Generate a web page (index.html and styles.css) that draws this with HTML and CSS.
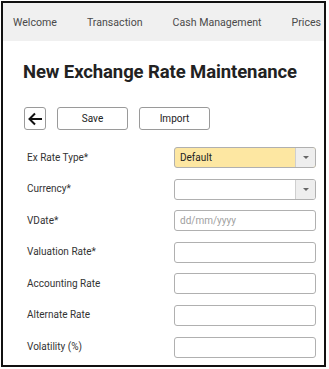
FILE: index.html
```html
<!DOCTYPE html>
<html>
<head>
<meta charset="utf-8">
<link rel="stylesheet" href="styles.css">
</head>
<body>
<div class="frame">
  <nav class="nav">
    <span class="nav-item">Welcome</span>
    <span class="nav-item">Transaction</span>
    <span class="nav-item">Cash Management</span>
    <span class="nav-item">Prices</span>
  </nav>
  <main class="content">
    <h1 class="title">New Exchange Rate Maintenance</h1>
    <div class="toolbar">
      <button class="btn btn-back" type="button" aria-label="Back">
        <svg width="16" height="14" viewBox="0 0 16 14"><path d="M15 7H2.5M8 1.5L2.5 7L8 12.5" fill="none" stroke="#111" stroke-width="2"/></svg>
      </button>
      <button class="btn btn-text" type="button">Save</button>
      <button class="btn btn-text" type="button">Import</button>
    </div>
    <div class="form">
      <label class="lbl">Ex Rate Type*</label>
      <div class="select select-yellow"><span class="select-val">Default</span><span class="caret-box"><span class="caret"></span></span></div>
      <label class="lbl">Currency*</label>
      <div class="select"><span class="select-val"></span><span class="caret-box"><span class="caret"></span></span></div>
      <label class="lbl">VDate*</label>
      <div class="input placeholder">dd/mm/yyyy</div>
      <label class="lbl">Valuation Rate*</label>
      <div class="input"></div>
      <label class="lbl">Accounting Rate</label>
      <div class="input"></div>
      <label class="lbl">Alternate Rate</label>
      <div class="input"></div>
      <label class="lbl">Volatility (%)</label>
      <div class="input"></div>
    </div>
  </main>
</div>
</body>
</html>
```
FILE: styles.css
```css
html, body {
  margin: 0;
  padding: 0;
  background: #fff;
}
body {
  font-family: Roboto, "Liberation Sans", Arial, sans-serif;
  color: #333;
}
.frame {
  box-sizing: border-box;
  margin: 1px 0 0 1px;
  width: 325px;
  height: 366px;
  border: 2px solid #111;
  overflow: hidden;
  background: #fff;
}
.nav {
  display: flex;
  height: 38px;
  align-items: center;
  background: #f0f0f0;
  padding-left: 10px;
  white-space: nowrap;
  overflow: hidden;
}
.nav-item {
  font-size: 10.6px;
  color: #4a4a4a;
  margin-right: 30px;
  flex: none;
}
.content {
  padding: 0 0 0 20px;
}
.title {
  margin: 20px 0 0 0;
  font-size: 18.5px;
  font-weight: 700;
  color: #222;
  letter-spacing: -0.1px;
  line-height: 22px;
}
.toolbar {
  display: flex;
  gap: 11px;
  margin-top: 24px;
  margin-left: 1px;
}
.btn {
  box-sizing: border-box;
  height: 23px;
  border: 1px solid #9a9a9a;
  border-radius: 3px;
  background: #fff;
  font-family: Roboto, "Liberation Sans", Arial, sans-serif;
  font-size: 10px;
  color: #222;
  padding: 0;
  display: flex;
  align-items: center;
  justify-content: center;
}
.btn-back {
  width: 22px;
}
.btn-text {
  width: 71px;
}
.form {
  display: grid;
  grid-template-columns: 151px 142px;
  grid-auto-rows: 21px;
  row-gap: 10.6px;
  margin-top: 17px;
  align-items: center;
}
.lbl {
  font-size: 10px;
  line-height: 12px;
  color: #333;
  padding-left: 4px;
}
.select, .input {
  box-sizing: border-box;
  height: 21px;
  border: 1px solid #b0b0b0;
  border-radius: 3px;
  background: #fff;
  font-size: 10px;
}
.select {
  display: flex;
  overflow: hidden;
}
.select-yellow {
  background: #fde7a2;
}
.select-val {
  flex: 1;
  padding-left: 5px;
  line-height: 19px;
  color: #222;
}
.caret-box {
  width: 19px;
  flex: none;
  background: #eeeeee;
  border-left: 1px solid #cfcfcf;
  display: flex;
  align-items: center;
  justify-content: center;
}
.caret {
  width: 0;
  height: 0;
  border-left: 3px solid transparent;
  border-right: 3px solid transparent;
  border-top: 3px solid #666;
}
.input {
  padding-left: 5px;
  line-height: 19px;
}
.placeholder {
  color: #a0a0a0;
}
```
